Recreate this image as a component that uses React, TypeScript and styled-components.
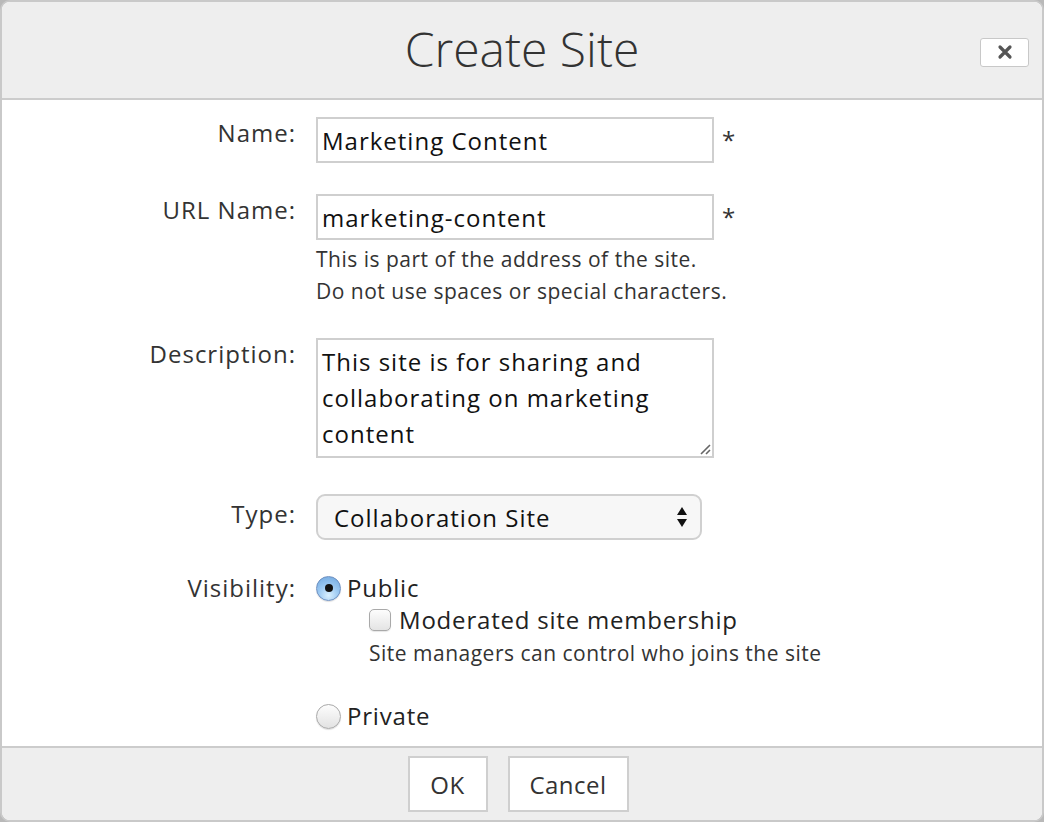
import React from "react";
import styled, { createGlobalStyle } from "styled-components";

const Global = createGlobalStyle`
  html, body { margin: 0; padding: 0; background: #b9b9b9; }
  body { font-family: "Open Sans", "Liberation Sans", sans-serif; color: #333; }
  * { box-sizing: border-box; }
`;

const Dialog = styled.div`
  width: 1044px;
  height: 822px;
  background: #fff;
  border: 2px solid #c9c9c9;
  border-radius: 10px;
  overflow: hidden;
  display: flex;
  flex-direction: column;
`;

const Header = styled.div`
  height: 98px;
  flex: none;
  background: #eeeeee;
  border-bottom: 2px solid #cccccc;
  display: grid;
  grid-template-columns: 1fr auto 1fr;
  align-items: center;
`;

const Title = styled.h1`
  grid-column: 2;
  margin: 0;
  font-weight: 300;
  font-size: 48px;
  color: #333;
  line-height: 1;
  padding-bottom: 2px;
`;

const CloseButton = styled.button`
  grid-column: 3;
  justify-self: end;
  margin-right: 13px;
  margin-top: 4px;
  width: 49px;
  height: 29px;
  background: #fff;
  border: 1px solid #c8c8c8;
  border-radius: 3px;
  display: flex;
  align-items: center;
  justify-content: center;
  padding: 0;
`;

const Body = styled.div`
  flex: 1;
  padding-top: 17px;
  display: flex;
  flex-direction: column;
`;

const Row = styled.div<{ $mt?: number }>`
  display: grid;
  grid-template-columns: 294px 1fr;
  column-gap: 20px;
  margin-top: ${(p) => p.$mt ?? 0}px;
`;

const Label = styled.div<{ $pt?: number }>`
  text-align: right;
  font-size: 24px;
  letter-spacing: 1px;
  color: #333;
  padding-top: ${(p) => p.$pt ?? 0}px;
  line-height: 32px;
`;

const FieldLine = styled.div`
  display: flex;
  align-items: flex-start;
  gap: 8px;
`;

const TextBox = styled.div`
  width: 398px;
  height: 46px;
  border: 2px solid #cfcfcf;
  background: #fff;
  font-size: 24px;
  letter-spacing: 1px;
  color: #111;
  padding: 0 4px;
  display: flex;
  align-items: center;
`;

const Required = styled.span`
  font-size: 24px;
  color: #333;
  line-height: 46px;
`;

const Help = styled.div`
  font-size: 21px;
  letter-spacing: 0.5px;
  color: #333;
  line-height: 32px;
  padding-top: 3px;
`;

const AreaWrap = styled.div`
  position: relative;
  width: 398px;
  height: 120px;
`;

const Area = styled.div`
  width: 100%;
  height: 100%;
  border: 2px solid #cfcfcf;
  background: #fff;
  font-size: 24px;
  letter-spacing: 1px;
  line-height: 36px;
  color: #111;
  padding: 4px 4px;
`;

const Grip = styled.svg`
  position: absolute;
  right: 3px;
  bottom: 3px;
`;

const Select = styled.div`
  width: 386px;
  height: 46px;
  border: 2px solid #d0d0d0;
  border-radius: 9px;
  background: #f7f7f7;
  font-size: 24px;
  letter-spacing: 1px;
  color: #111;
  padding: 0 12px 0 16px;
  display: flex;
  align-items: center;
  justify-content: space-between;
`;

const OptionLine = styled.div<{ $indent?: number; $gap?: number }>`
  display: flex;
  align-items: center;
  gap: ${(p) => p.$gap ?? 6}px;
  padding-left: ${(p) => p.$indent ?? 0}px;
  font-size: 24px;
  letter-spacing: 0.8px;
  color: #222;
  line-height: 32px;
`;

const Radio = styled.span<{ $checked?: boolean }>`
  width: 25px;
  height: 25px;
  border-radius: 50%;
  flex: none;
  display: flex;
  align-items: center;
  justify-content: center;
  border: 1px solid ${(p) => (p.$checked ? "#6d8fc0" : "#a9a9a9")};
  background: ${(p) =>
    p.$checked
      ? "radial-gradient(circle at 50% 80%, #d9f0ff 0%, #9cc9f2 45%, #6ea6de 100%)"
      : "linear-gradient(#fdfdfd, #e2e2e2)"};
  box-shadow: 0 1px 1px rgba(0, 0, 0, 0.12);
  &::after {
    content: "";
    display: ${(p) => (p.$checked ? "block" : "none")};
    width: 8px;
    height: 8px;
    border-radius: 50%;
    background: #111;
  }
`;

const Check = styled.span`
  width: 22px;
  height: 22px;
  flex: none;
  border-radius: 5px;
  border: 1px solid #a9a9a9;
  background: linear-gradient(#fdfdfd, #e4e4e4);
  box-shadow: 0 1px 1px rgba(0, 0, 0, 0.1);
`;

const SubHelp = styled.div`
  font-size: 21px;
  letter-spacing: 0.5px;
  color: #333;
  padding-left: 53px;
  line-height: 32px;
  padding-top: 1px;
`;

const PrivateBlock = styled.div`
  margin-top: 31px;
`;

const Footer = styled.div`
  height: 74px;
  flex: none;
  background: #eeeeee;
  border-top: 2px solid #cccccc;
  display: flex;
  justify-content: center;
  align-items: flex-start;
  gap: 20px;
  padding-top: 8px;
  padding-right: 8px;
`;

const Button = styled.button<{ $w: number }>`
  width: ${(p) => p.$w}px;
  height: 56px;
  background: #fff;
  border: 2px solid #cfcfcf;
  font-family: "Open Sans", "Liberation Sans", sans-serif;
  font-size: 24px;
  letter-spacing: 0.5px;
  color: #333;
  padding: 0;
`;

export default function App() {
  return (
    <>
      <Global />
      <Dialog>
        <Header>
          <Title>Create Site</Title>
          <CloseButton aria-label="Close">
            <svg width="16" height="16" viewBox="0 0 16 16">
              <path d="M3 3 L13 13 M13 3 L3 13" stroke="#555" strokeWidth="3.2" strokeLinecap="round" />
            </svg>
          </CloseButton>
        </Header>
        <Body>
          <Row>
            <Label>Name:</Label>
            <FieldLine>
              <TextBox>Marketing Content</TextBox>
              <Required>*</Required>
            </FieldLine>
          </Row>
          <Row $mt={31}>
            <Label>URL Name:</Label>
            <div>
              <FieldLine>
                <TextBox>marketing-content</TextBox>
                <Required>*</Required>
              </FieldLine>
              <Help>
                This is part of the address of the site.
                <br />
                Do not use spaces or special characters.
              </Help>
            </div>
          </Row>
          <Row $mt={31}>
            <Label>Description:</Label>
            <AreaWrap>
              <Area>
                This site is for sharing and
                <br />
                collaborating on marketing
                <br />
                content
              </Area>
              <Grip width="12" height="12" viewBox="0 0 12 12">
                <path d="M2 11 L11 2 M7 11 L11 7" stroke="#666" strokeWidth="1.6" />
              </Grip>
            </AreaWrap>
          </Row>
          <Row $mt={36}>
            <Label $pt={4}>Type:</Label>
            <Select>
              <span>Collaboration Site</span>
              <svg width="12" height="24" viewBox="0 0 12 24">
                <path d="M6 2 L11 10 L1 10 Z M6 22 L11 14 L1 14 Z" fill="#111" />
              </svg>
            </Select>
          </Row>
          <Row $mt={32}>
            <Label>Visibility:</Label>
            <div>
              <OptionLine>
                <Radio $checked />
                Public
              </OptionLine>
              <OptionLine $indent={53} $gap={8}>
                <Check />
                Moderated site membership
              </OptionLine>
              <SubHelp>Site managers can control who joins the site</SubHelp>
              <PrivateBlock>
                <OptionLine>
                  <Radio />
                  Private
                </OptionLine>
              </PrivateBlock>
            </div>
          </Row>
        </Body>
        <Footer>
          <Button $w={80}>OK</Button>
          <Button $w={121}>Cancel</Button>
        </Footer>
      </Dialog>
    </>
  );
}
